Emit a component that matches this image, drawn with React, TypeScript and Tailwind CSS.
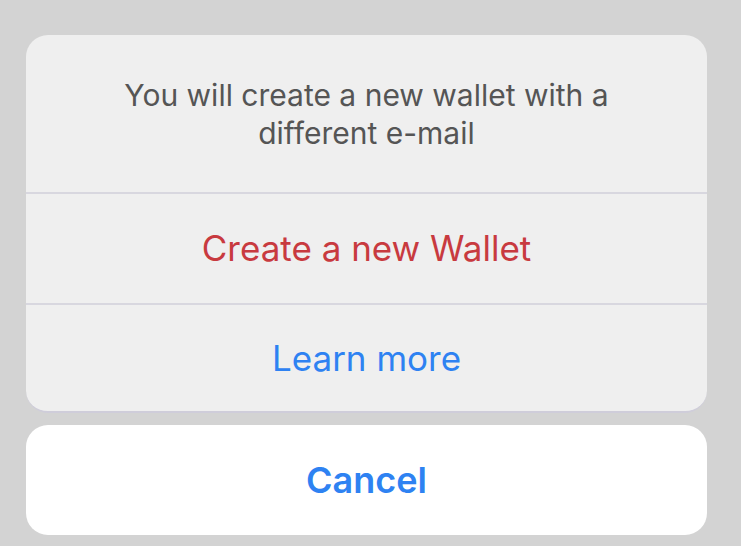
export default function App() {
  return (
    <div className="w-[741px] h-[546px] bg-[#d3d3d3] px-[26px] pt-[35px] font-['Inter',sans-serif] overflow-hidden">
      {/* action sheet */}
      <div className="w-[681px] bg-[#efefef] rounded-[22px] border-b-2 border-[#cfcdda] overflow-hidden">
        <div className="h-[157px] flex items-center justify-center px-10 text-center text-[30px] leading-[38px] text-[#555555]">
          <p>
            You will create a new wallet with a
            <br />
            different e-mail
          </p>
        </div>
        <div className="h-[111px] flex items-center justify-center border-t-2 border-[#d8d7df] text-[35px] text-[#c83a3f]">
          Create a new Wallet
        </div>
        <div className="h-[108px] flex items-center justify-center border-t-2 border-[#d8d7df] text-[35px] text-[#2e82f2]">
          Learn more
        </div>
      </div>
      <div className="mt-[12px] w-[681px] h-[110px] bg-white rounded-[22px] flex items-center justify-center text-[36px] font-semibold text-[#2e82f2]">
        Cancel
      </div>
    </div>
  );
}
